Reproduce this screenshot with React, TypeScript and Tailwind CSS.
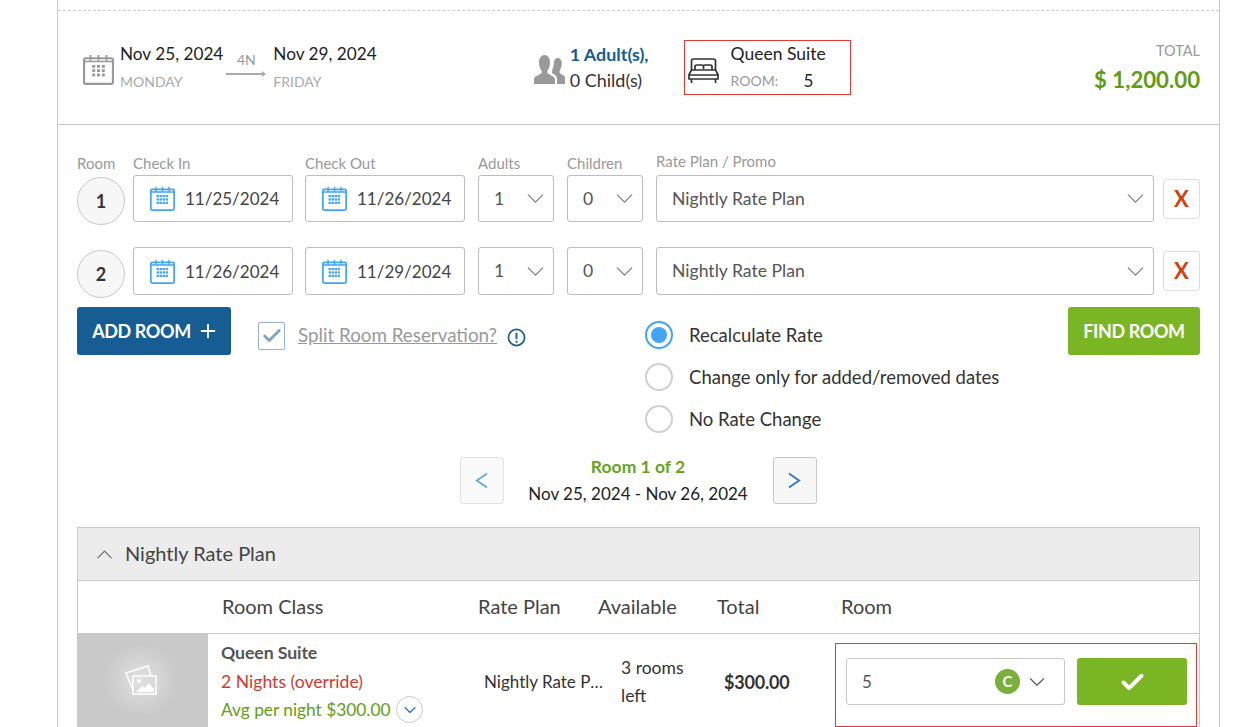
import { Check, ChevronDown, ChevronUp, Plus } from "lucide-react";

function CalendarIcon({ color, className, xs }: { color: string; className: string; xs: number[] }) {
  const dots = [];
  for (const y of [11.5, 15.5, 19.5]) {
    for (const x of xs) {
      dots.push(<rect key={`${x}-${y}`} x={x - 1.4} y={y - 1.2} width="2.8" height="2.600" fill={color} />);
    }
  }
  return (
    <svg viewBox="0 0 29 29" className={className} fill="none">
      <rect x="1" y="4" width="27" height="24" rx="1.500" stroke={color} strokeWidth="2" />
      <path d="M1 7h27M7 1v6M14.500 1v6M22 1v6" stroke={color} strokeWidth="1.600" />
      {dots}
    </svg>
  );
}

function DateField({ value }: { value: string }) {
  return (
    <div className="flex h-full w-[160px] items-center rounded-[3px] border border-[#bdbdbd] pl-4 text-[17px] text-[#444]">
      <CalendarIcon color="#42a5f5" xs={[9, 12.5, 16, 19.5]} className="mr-[10px] h-[25px] w-[25px] shrink-0" />
      <span className="pt-[1px]">{value}</span>
    </div>
  );
}

function SelectField({ value, className }: { value: string; className: string }) {
  return (
    <div className={`flex h-full items-center justify-between rounded-[3px] border border-[#bdbdbd] pl-[15px] pr-[3px] text-[17.6px] text-[#555] ${className}`}>
      <span className="pt-[1px]">{value}</span>
      <ChevronDown className="h-[29px] w-[29px] text-[#777]" strokeWidth={0.9} />
    </div>
  );
}

function RoomRow({ num, from, to, rowClass, circleClass }: { num: string; from: string; to: string; rowClass: string; circleClass: string }) {
  return (
    <div className={`flex items-center ${rowClass}`}>
      <div className={`flex h-[48px] w-[48px] shrink-0 items-center justify-center self-start rounded-full border border-[#c8c8c8] bg-[#f7f7f7] text-[18px] font-bold text-[#333] ${circleClass}`}>
        {num}
      </div>
      <div className="ml-2 h-full">
        <DateField value={from} />
      </div>
      <div className="ml-3 h-full">
        <DateField value={to} />
      </div>
      <SelectField value="1" className="ml-[13px] w-[76px]" />
      <SelectField value="0" className="ml-[13px] w-[76px]" />
      <SelectField value="Nightly Rate Plan" className="ml-[13px] w-[498px]" />
      <div className="ml-[9px] flex h-[40px] w-[37px] items-center justify-center rounded-[3px] border border-[#ddd] text-[22px] font-bold leading-none text-[#d43f0c]">
        X
      </div>
    </div>
  );
}

function Radio({ label, active }: { label: string; active?: boolean }) {
  return (
    <div className="flex h-[42px] items-center text-[18.5px] text-[#333]">
      <span className={`flex h-[28px] w-[28px] items-center justify-center rounded-full border-2 ${active ? "border-[#42a5f5]" : "border-[#d0d0d0]"}`}>
        {active && <span className="h-[16px] w-[16px] rounded-full bg-[#42a5f5]" />}
      </span>
      <span className="ml-[16px] pt-[2px]">{label}</span>
    </div>
  );
}

export default function App() {
  return (
    <div className="h-[727px] overflow-hidden bg-white pl-[57px] pr-[32px] font-['Lato','Open_Sans',sans-serif]">
      <div className="h-full w-[1163px] border-x border-[#c8c8c8] pt-[10px]">
        {/* booking summary */}
        <div className="relative flex h-[115px] items-start border-y border-[#c8c8c8] border-t-[#ccc] [border-top-style:dashed]">
          <div className="mt-[32px] ml-[25px] flex">
            <CalendarIcon color="#999" xs={[10, 14.5, 19]} className="mt-[11px] h-[31px] w-[31px]" />
            <div className="ml-[6px]">
              <div className="text-[17.2px] leading-[22px] text-[#222]">Nov 25, 2024</div>
              <div className="mt-[8px] text-[14px] leading-[18px] text-[#aaa]">MONDAY</div>
            </div>
            <div className="ml-[3px] flex w-[40px] flex-col items-center pt-[8px]">
              <span className="text-[14px] leading-[18px] text-[#999]">4N</span>
              <svg viewBox="0 0 40 6" className="mt-[2px] h-[6px] w-[40px]">
                <path d="M0 3h37" stroke="#aaa" strokeWidth="2" />
                <path d="M36 0l4 3-4 3z" fill="#aaa" />
              </svg>
            </div>
            <div className="ml-[7px]">
              <div className="text-[17.2px] leading-[22px] text-[#222]">Nov 29, 2024</div>
              <div className="mt-[8px] text-[14px] leading-[18px] text-[#aaa]">FRIDAY</div>
            </div>
          </div>
          <div className="mt-[31px] ml-[157px] flex">
            <svg viewBox="0 0 31 30" className="mt-[12px] h-[30px] w-[31px]" fill="#999">
              <path d="M0 30v-5c0-3 6-4 7.500-6 .4-1 .3-2-.4-3C5.500 14 5 11 5 8c0-4 2.500-7 5.500-7S16 4 16 8c0 3-.5 6-2.100 8-.7 1-.8 2-.4 3 1.500 2 7 3 7.500 6v5z" />
              <path d="M23 30v-6c0-2-3.500-4-5-5 .4-.8.400-1.500 0-2.500 1-2 1.800-5 1.800-7.500 0-3 1.800-5 4-5s4 2 4 5c0 2.500-.8 5-1.800 7-.5 1-.6 2-.2 3 1 1.500 4.200 2 5.200 4v7z" />
            </svg>
            <div className="ml-[5px]">
              <div className="text-[17.9px] font-bold leading-[24px] text-[#155d93]">1 Adult(s),</div>
              <div className="mt-[2px] text-[18px] leading-[24px] text-[#333]">0 Child(s)</div>
            </div>
          </div>
          <div className="mt-[29px] ml-[35px] flex h-[55px] w-[167px] border border-[#e53935]">
            <svg viewBox="0 0 31 25" className="mt-[17px] ml-[3px] h-[25px] w-[31px]" fill="none" stroke="#333" strokeWidth="1.700">
              <path d="M3.500 12V3C3.500 2 4.500 1 5.500 1h20c1 0 2 1 2 2v9" />
              <path d="M7 12V8.500c0-1 1-1.500 2-1.500h5c1 0 1.500.5 1.500 1.500V11M15.500 11V8.500c0-1 .5-1.500 1.500-1.500h5c1 0 2 .5 2 1.500V12" />
              <path d="M3.500 12h24l2.500 4.500v4.500H1v-4.500zM1 17h29M3.500 21v4M27.500 21v4" />
            </svg>
            <div className="ml-[12px]">
              <div className="mt-[1px] text-[17.5px] leading-[24px] text-[#222]">Queen Suite</div>
              <div className="mt-[3px] flex items-center">
                <span className="w-[73px] text-[14px] leading-[24px] text-[#999]">ROOM:</span>
                <span className="text-[17px] leading-[24px] text-[#222]">5</span>
              </div>
            </div>
          </div>
          <div className="mt-[30px] ml-auto mr-[19px] text-right">
            <div className="text-[14.5px] leading-[20px] text-[#999]">TOTAL</div>
            <div className="mt-[4px] text-[22.2px] font-bold leading-[30px] text-[#5f9e14]">$ 1,200.00</div>
          </div>
        </div>

        {/* room editor */}
        <div className="px-[19px]">
          <div className="mt-[27px] flex h-[23px] items-start text-[15px] leading-[22px] text-[#999]">
            <span className="w-[56px]">Room</span>
            <span className="w-[172px]">Check In</span>
            <span className="w-[173px]">Check Out</span>
            <span className="w-[89px]">Adults</span>
            <span className="w-[89px]">Children</span>
            <span className="-mt-[2px]">Rate Plan / Promo</span>
          </div>
          <RoomRow num="1" from="11/25/2024" to="11/26/2024" rowClass="h-[47px]" circleClass="mt-[2px]" />
          <RoomRow num="2" from="11/26/2024" to="11/29/2024" rowClass="mt-[25px] h-[48px]" circleClass="mt-[3px]" />

          <div className="mt-[12px] flex items-start">
            <div className="flex h-[48px] w-[154px] items-center justify-center rounded-[3px] bg-[#155d93] pl-[3px] text-[18px] font-bold tracking-[-0.4px] text-white">
              ADD ROOM
              <Plus className="ml-[6px] h-[22px] w-[22px]" strokeWidth={2} />
            </div>
            <div className="ml-[27px] mt-[15px] flex h-[28px] w-[27px] items-center justify-center rounded-[2px] border border-[#8fb3d0]">
              <Check className="h-[22px] w-[22px] text-[#7ba5c7]" strokeWidth={3} />
            </div>
            <div className="ml-[13px] mt-[16px] text-[18.800px] leading-[24px] text-[#999] underline">Split Room Reservation?</div>
            <svg viewBox="0 0 20 20" className="ml-[10px] mt-[21px] h-[19px] w-[19px]" fill="none">
              <circle cx="10" cy="10" r="8.500" stroke="#155d93" strokeWidth="1.800" />
              <path d="M10 5v6.500M10 13.500v2" stroke="#155d93" strokeWidth="2" />
            </svg>
            <div className="ml-[119px] mt-[7px] flex flex-col">
              <Radio label="Recalculate Rate" active />
              <Radio label="Change only for added/removed dates" />
              <Radio label="No Rate Change" />
            </div>
            <div className="ml-auto flex h-[48px] w-[132px] items-center justify-center rounded-[3px] bg-[#7ab623] text-[18px] font-bold tracking-[-0.4px] text-white">
              FIND ROOM
            </div>
          </div>

          {/* room pager */}
          <div className="mt-[17px] flex h-[47px] justify-center pr-[1px]">
            <div className="flex h-[47px] w-[44px] items-center justify-center rounded-[3px] border border-[#e2e2e2] bg-[#f9f9f9]">
              <svg viewBox="0 0 14 18" className="h-[17px] w-[13px]" fill="none" stroke="#69a9da" strokeWidth="2">
                <path d="M13 1.500L2 9l11 7.500" />
              </svg>
            </div>
            <div className="w-[269px] text-center">
              <div className="text-[17.5px] font-bold leading-[20px] text-[#66a51c]">Room 1 of 2</div>
              <div className="mt-[5px] text-[17px] leading-[24px] text-[#222]">Nov 25, 2024 - Nov 26, 2024</div>
            </div>
            <div className="flex h-[47px] w-[44px] items-center justify-center rounded-[3px] border border-[#c8c8c8] bg-[#f7f7f7]">
              <svg viewBox="0 0 14 18" className="h-[17px] w-[13px]" fill="none" stroke="#2a7ac0" strokeWidth="2">
                <path d="M1 1.500L12 9 1 16.500" />
              </svg>
            </div>
          </div>

          {/* rate plan accordion */}
          <div className="mt-[23px] border-x border-t border-[#c8c8c8]">
            <div className="flex h-[53px] items-center border-b border-[#c8c8c8] bg-[#ececec] pl-[13px] text-[20px] text-[#444]">
              <ChevronUp className="h-[27px] w-[27px] text-[#666]" strokeWidth={1} />
              <span className="ml-[7px] pb-[2px]">Nightly Rate Plan</span>
            </div>
            <div className="flex h-[53px] items-center border-b border-[#c8c8c8] pb-[2px] pl-[144px] text-[20px] text-[#444]">
              <span className="w-[256px]">Room Class</span>
              <span className="w-[120px]">Rate Plan</span>
              <span className="w-[119px]">Available</span>
              <span className="w-[124px]">Total</span>
              <span>Room</span>
            </div>
            <div className="flex h-[94px] items-start">
              <div className="flex h-full w-[130px] shrink-0 items-start justify-center bg-[#c9c9c9]">
                <div className="mt-[8px] mr-[4px] flex h-[76px] w-[76px] items-center justify-center bg-[radial-gradient(circle,#dedede_10%,#c9c9c9_68%)]">
                  <svg viewBox="0 0 32 30" className="h-[30px] w-[32px]" fill="none" stroke="#fff" strokeWidth="1.500">
                    <path d="M8 25L1 8l22-7 3 10" />
                    <rect x="8" y="11" width="23" height="18" />
                    <circle cx="14" cy="16" r="2" fill="#fff" stroke="none" />
                    <path d="M11 27l6-6 3 2 4-5 5 6v3z" fill="#fff" stroke="none" />
                  </svg>
                </div>
              </div>
              <div className="ml-[13px] w-[263px] shrink-0 pt-[7px]">
                <div className="text-[17.7px] font-bold leading-[24px] tracking-[-0.1px] text-[#555]">Queen Suite</div>
                <div className="mt-[5px] text-[17.600px] leading-[24px] text-[#d13a2e]">2 Nights (override)</div>
                <div className="mt-[2px] flex items-center text-[17.300px] leading-[24px] text-[#5f9e14]">
                  Avg per night $300.00
                  <span className="ml-[6px] flex h-[27px] w-[27px] items-center justify-center rounded-full border border-[#c8c8c8]">
                    <ChevronDown className="h-[20px] w-[20px] text-[#2a7ac0]" strokeWidth={1.600} />
                  </span>
                </div>
              </div>
              <div className="w-[123px] shrink-0 truncate pt-[36px] text-[17px] leading-[24px] text-[#333]">Nightly Rate Plan</div>
              <div className="ml-[14px] w-[80px] shrink-0 pt-[20px] text-[17.500px] leading-[28px] text-[#333]">
                3 rooms left
              </div>
              <div className="ml-[23px] w-[111px] shrink-0 pt-[36px] text-[18px] font-bold leading-[24px] tracking-[-0.2px] text-[#333]">$300.00</div>
              <div className="mt-[9px] flex h-[84px] w-[362px] shrink-0 border border-[#e53935] pl-[10px] pt-[14px]">
                <div className="flex h-[47px] w-[219px] items-center rounded-[3px] border border-[#c8c8c8] pl-[15px] pr-[14px] text-[17px] text-[#555]">
                  <span>5</span>
                  <span className="ml-auto flex h-[25px] w-[25px] items-center justify-center rounded-full bg-[#7aaf3c] text-[15px] font-bold text-white">C</span>
                  <ChevronDown className="ml-[4px] h-[26px] w-[26px] text-[#555]" strokeWidth={1} />
                </div>
                <div className="ml-[12px] flex h-[47px] w-[110px] items-center justify-center rounded-[3px] bg-[#7ab623] pt-[2px]">
                  <Check className="h-[27px] w-[27px] text-white" strokeWidth={3.500} />
                </div>
              </div>
            </div>
          </div>
        </div>
      </div>
    </div>
  );
}
